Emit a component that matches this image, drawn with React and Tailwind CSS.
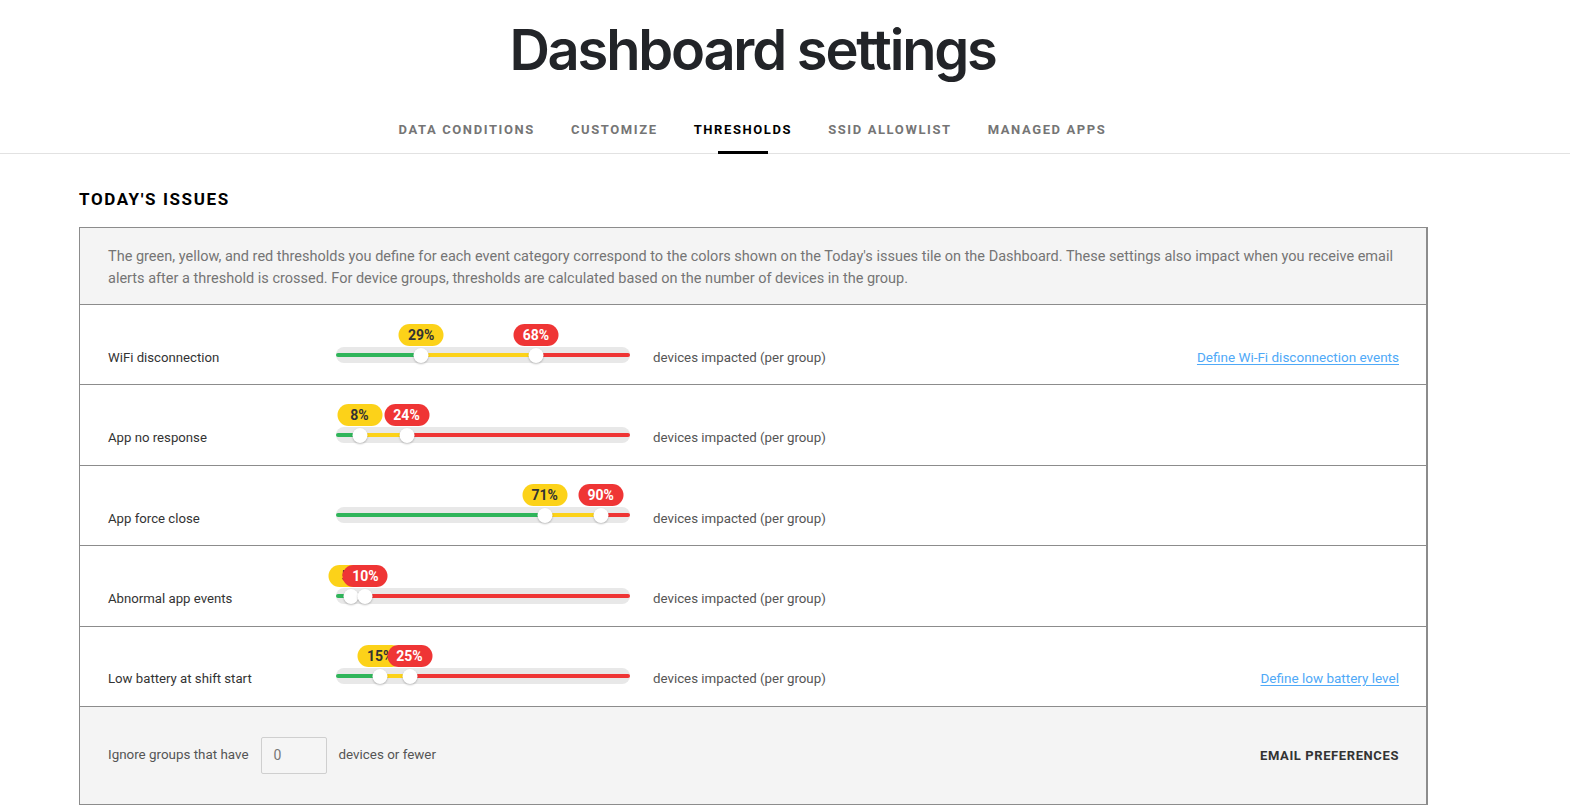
import React from 'react';

const tabs = ['DATA CONDITIONS', 'CUSTOMIZE', 'THRESHOLDS', 'SSID ALLOWLIST', 'MANAGED APPS'];

const rows = [
  { label: 'WiFi disconnection', low: 29, high: 68, link: 'Define Wi-Fi disconnection events' },
  { label: 'App no response', low: 8, high: 24 },
  { label: 'App force close', low: 71, high: 90 },
  { label: 'Abnormal app events', low: 5, high: 10 },
  { label: 'Low battery at shift start', low: 15, high: 25, link: 'Define low battery level' },
];

const TRACK = 294;

const ThresholdSlider = ({ low, high }) => {
  const lowX = (low / 100) * TRACK;
  const highX = (high / 100) * TRACK;
  return (
    <div className="relative w-[294px] h-4 rounded-full bg-[#e8e8e8]">
      {/* colour bands */}
      <div className="absolute left-0 top-[6px] h-1 rounded-l-full bg-[#2fb55a]" style={{ width: lowX }} />
      <div className="absolute top-[6px] h-1 bg-[#fcd219]" style={{ left: lowX, width: highX - lowX }} />
      <div className="absolute right-0 top-[6px] h-1 rounded-r-full bg-[#ef3535]" style={{ left: highX }} />

      {/* value bubbles */}
      <div
        className="absolute -top-[23px] h-[22px] w-[45px] -translate-x-1/2 rounded-full bg-[#fcd219] text-[#333] text-[14px] font-bold leading-[22px] text-center"
        style={{ left: lowX }}
      >
        {low}%
      </div>
      <div
        className="absolute -top-[23px] h-[22px] w-[45px] -translate-x-1/2 rounded-full bg-[#ef3535] text-white text-[14px] font-bold leading-[22px] text-center"
        style={{ left: highX }}
      >
        {high}%
      </div>

      {/* thumbs */}
      <div
        className="absolute top-[1px] h-[15px] w-[15px] -translate-x-1/2 rounded-full bg-white shadow-[0_1px_2px_rgba(0,0,0,0.25)]"
        style={{ left: lowX }}
      />
      <div
        className="absolute top-[1px] h-[15px] w-[15px] -translate-x-1/2 rounded-full bg-white shadow-[0_1px_2px_rgba(0,0,0,0.25)]"
        style={{ left: highX }}
      />
    </div>
  );
};

export default function App() {
  return (
    <div className="min-h-screen bg-white font-['Roboto',sans-serif] text-[#333]">
      {/* Title */}
      <h1 className="pt-[16px] pr-[65px] text-center text-[56px] leading-[68px] font-semibold tracking-[-2.2px] text-[#222428] font-['Inter',sans-serif]">
        Dashboard settings
      </h1>

      {/* Tabs */}
      <div className="mt-[36px] border-b border-[#e2e2e2]">
        <div className="flex justify-center gap-[36px] pr-[65px]">
          {tabs.map((t) => (
            <div
              key={t}
              className={`relative pb-[13px] text-[13px] font-bold tracking-[1.6px] ${
                t === 'THRESHOLDS' ? 'text-black' : 'text-[#757575]'
              }`}
            >
              {t}
              {t === 'THRESHOLDS' && (
                <div className="absolute left-1/2 -bottom-[1px] h-[3px] w-[50px] -translate-x-1/2 bg-black" />
              )}
            </div>
          ))}
        </div>
      </div>

      {/* Content */}
      <div className="ml-[79px] w-[1349px]">
        <h2 className="mt-[33px] text-[17px] font-bold tracking-[1.6px] text-black">TODAY'S ISSUES</h2>

        <div className="mt-[15px] border border-r-2 border-[#8c8c8c]">
          <div className="bg-[#f4f4f4] px-[28px] pt-[18px] pb-[14px] text-[14.5px] leading-[22px] text-[#757575]">
            The green, yellow, and red thresholds you define for each event category correspond to the colors shown on the
            Today's issues tile on the Dashboard. These settings also impact when you receive email alerts after a threshold
            is crossed. For device groups, thresholds are calculated based on the number of devices in the group.
          </div>

          {rows.map((r) => (
            <div key={r.label} className="flex h-[80.4px] items-center border-t border-[#8c8c8c] pl-[28px] pr-[27px] pt-[20px]">
              <div className="w-[228px] pt-[6px] text-[13.2px] text-[#333]">{r.label}</div>
              <ThresholdSlider low={r.low} high={r.high} />
              <div className="ml-[23px] pt-[6px] text-[13.3px] text-[#555]">devices impacted (per group)</div>
              {r.link && (
                <a href="#" className="ml-auto pt-[4px] text-[13.5px] text-[#4fa9f7] underline underline-offset-2">
                  {r.link}
                </a>
              )}
            </div>
          ))}

          <div className="flex h-[98px] items-center border-t border-[#8c8c8c] bg-[#f4f4f4] pl-[28px] pr-[27px]">
            <span className="text-[13.4px] text-[#555]">Ignore groups that have</span>
            <div className="ml-[12px] flex h-[37px] w-[66px] items-center rounded-[2px] border border-[#cfcfcf] bg-[#f5f5f5] pl-[12px] text-[14px] text-[#777]">
              0
            </div>
            <span className="ml-[12px] text-[13.4px] text-[#555]">devices or fewer</span>
            <span className="ml-auto text-[13px] font-bold tracking-[0.6px] text-[#333]">EMAIL PREFERENCES</span>
          </div>
        </div>
      </div>
    </div>
  );
}
